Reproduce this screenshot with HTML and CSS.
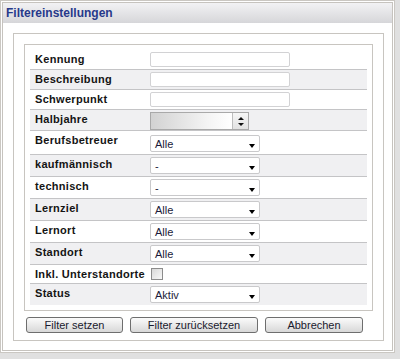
FILE: index.html
```html
<!DOCTYPE html>
<html lang="de">
<head>
  <meta charset="UTF-8" />
  <title>Filtereinstellungen</title>
  <link rel="stylesheet" href="styles.css">
</head>
<body>

  <div class="dialog">
    <div class="frame">
      <div class="titlebar">Filtereinstellungen</div>
      <div class="content">
        <div class="fieldset">
          <div class="table">
            <div class="row">
              <div class="label">Kennung</div>
              <div class="ctrl"><input class="text" type="text" /></div>
            </div>
            <div class="row alt">
              <div class="label">Beschreibung</div>
              <div class="ctrl"><input class="text" type="text" /></div>
            </div>
            <div class="row">
              <div class="label">Schwerpunkt</div>
              <div class="ctrl"><input class="text" type="text" /></div>
            </div>
            <div class="row alt mid">
              <div class="label">Halbjahre</div>
              <div class="ctrl">
                <div class="spinner">
                  <span class="spin-field"></span>
                  <span class="spin-btn"><i class="up"></i><i class="down"></i></span>
                </div>
              </div>
            </div>
            <div class="row big">
              <div class="label">Berufsbetreuer</div>
              <div class="ctrl low"><div class="select"><span>Alle</span><i class="arrow"></i></div></div>
            </div>
            <div class="row alt tall">
              <div class="label">kaufmännisch</div>
              <div class="ctrl"><div class="select"><span>-</span><i class="arrow"></i></div></div>
            </div>
            <div class="row tall">
              <div class="label">technisch</div>
              <div class="ctrl"><div class="select"><span>-</span><i class="arrow"></i></div></div>
            </div>
            <div class="row alt tall">
              <div class="label">Lernziel</div>
              <div class="ctrl"><div class="select"><span>Alle</span><i class="arrow"></i></div></div>
            </div>
            <div class="row tall">
              <div class="label">Lernort</div>
              <div class="ctrl"><div class="select"><span>Alle</span><i class="arrow"></i></div></div>
            </div>
            <div class="row alt tall">
              <div class="label">Standort</div>
              <div class="ctrl"><div class="select"><span>Alle</span><i class="arrow"></i></div></div>
            </div>
            <div class="row short">
              <div class="label">Inkl. Unterstandorte</div>
              <div class="ctrl check-cell"><span class="checkbox"></span></div>
            </div>
            <div class="row alt tall last">
              <div class="label">Status</div>
              <div class="ctrl"><div class="select"><span>Aktiv</span><i class="arrow"></i></div></div>
            </div>
          </div>

          <div class="buttons">
            <button class="btn w1">Filter setzen</button>
            <button class="btn w2">Filter zurücksetzen</button>
            <button class="btn w3">Abbrechen</button>
          </div>
        </div>
      </div>
    </div>
  </div>

</body>
</html>
```

FILE: styles.css
```css
body {
  margin: 0;
  background-color: #e0e0e0;
  font-family: "Liberation Sans", Arial, sans-serif;
}

.dialog {
  width: 395px;
  height: 353px;
  box-sizing: border-box;
  border: 1px solid #cac7c2;
  padding: 1px;
  background: #fff;
}

.frame {
  height: 100%;
  box-sizing: border-box;
  border: 1px solid #c6c3be;
}

.titlebar {
  height: 20px;
  line-height: 20px;
  padding-left: 3px;
  background: linear-gradient(#f2f2f4, #d6d6d9);
  color: #27398a;
  font-weight: bold;
  font-size: 12px;
}

.content {
  padding: 10px 8px 0 10px;
}

.fieldset {
  border: 1px solid #c8c5c0;
  padding: 10px 10px 7px 10px;
}

.table {
  border: 1px solid #c8c5c0;
  padding: 5px 5px 5px 5px;
}

.row {
  display: flex;
  height: 19px;
  border-bottom: 1px solid #c4c4c6;
}

.row.alt {
  background-color: #f0f0f2;
}

.row.mid { height: 20px; }
.row.big { height: 23px; }
.row.tall { height: 21px; }
.row.short { height: 18px; }

.row.last {
  border-bottom: none;
}

.label {
  width: 115px;
  padding: 3px 0 0 5px;
  font-weight: bold;
  font-size: 11px;
  line-height: 13px;
  letter-spacing: 0.3px;
  color: #141414;
  white-space: nowrap;
}

.ctrl {
  padding-top: 2px;
}

.ctrl.low {
  padding-top: 4px;
}

.text {
  display: block;
  width: 140px;
  height: 15px;
  box-sizing: border-box;
  margin: 0;
  border: 1px solid #d2d2d4;
  border-radius: 2px;
  background: #fff;
}

.spinner {
  display: flex;
  width: 99px;
  height: 18px;
  box-sizing: border-box;
  border: 1px solid #a9a9a9;
}

.spin-field {
  flex: 1;
  background: linear-gradient(to right, #d2d2d2, #f4f4f4 70%, #fff);
}

.spin-btn {
  width: 15px;
  display: flex;
  flex-direction: column;
  align-items: center;
  justify-content: center;
  gap: 3px;
  border-left: 1px solid #bdbdbd;
  background: linear-gradient(#f6f6f6, #e2e2e2);
}

.spin-btn .up {
  border-left: 3px solid transparent;
  border-right: 3px solid transparent;
  border-bottom: 3px solid #111;
}

.spin-btn .down {
  border-left: 3px solid transparent;
  border-right: 3px solid transparent;
  border-top: 3px solid #111;
}

.select {
  display: flex;
  justify-content: space-between;
  align-items: center;
  width: 110px;
  height: 17px;
  box-sizing: border-box;
  padding: 0 4px 0 4px;
  border: 1px solid #c9c9cb;
  border-radius: 2px;
  background: #fff;
  font-size: 11px;
  color: #1b1b3a;
}

.select .arrow {
  margin-top: 4px;
  border-left: 3.5px solid transparent;
  border-right: 3.5px solid transparent;
  border-top: 4px solid #000;
}

.check-cell {
  padding: 3px 0 0 1px;
}

.checkbox {
  display: block;
  width: 12px;
  height: 12px;
  box-sizing: border-box;
  border: 1px solid #8c8c8c;
  background: linear-gradient(135deg, #d8d8d8, #f8f8f8);
}

.buttons {
  display: flex;
  gap: 7px;
  margin: 6px 0 0 2px;
}

.btn {
  height: 16px;
  box-sizing: border-box;
  margin: 0;
  padding: 0;
  border: 1px solid #6e6e6e;
  border-radius: 3px;
  background: linear-gradient(#fbfbfb, #d8d8d8);
  font-family: "Liberation Sans", Arial, sans-serif;
  font-size: 11px;
  line-height: 14px;
  color: #1a1a2e;
}

.w1 { width: 97px; }
.w2 { width: 128px; }
.w3 { width: 98px; }
```
